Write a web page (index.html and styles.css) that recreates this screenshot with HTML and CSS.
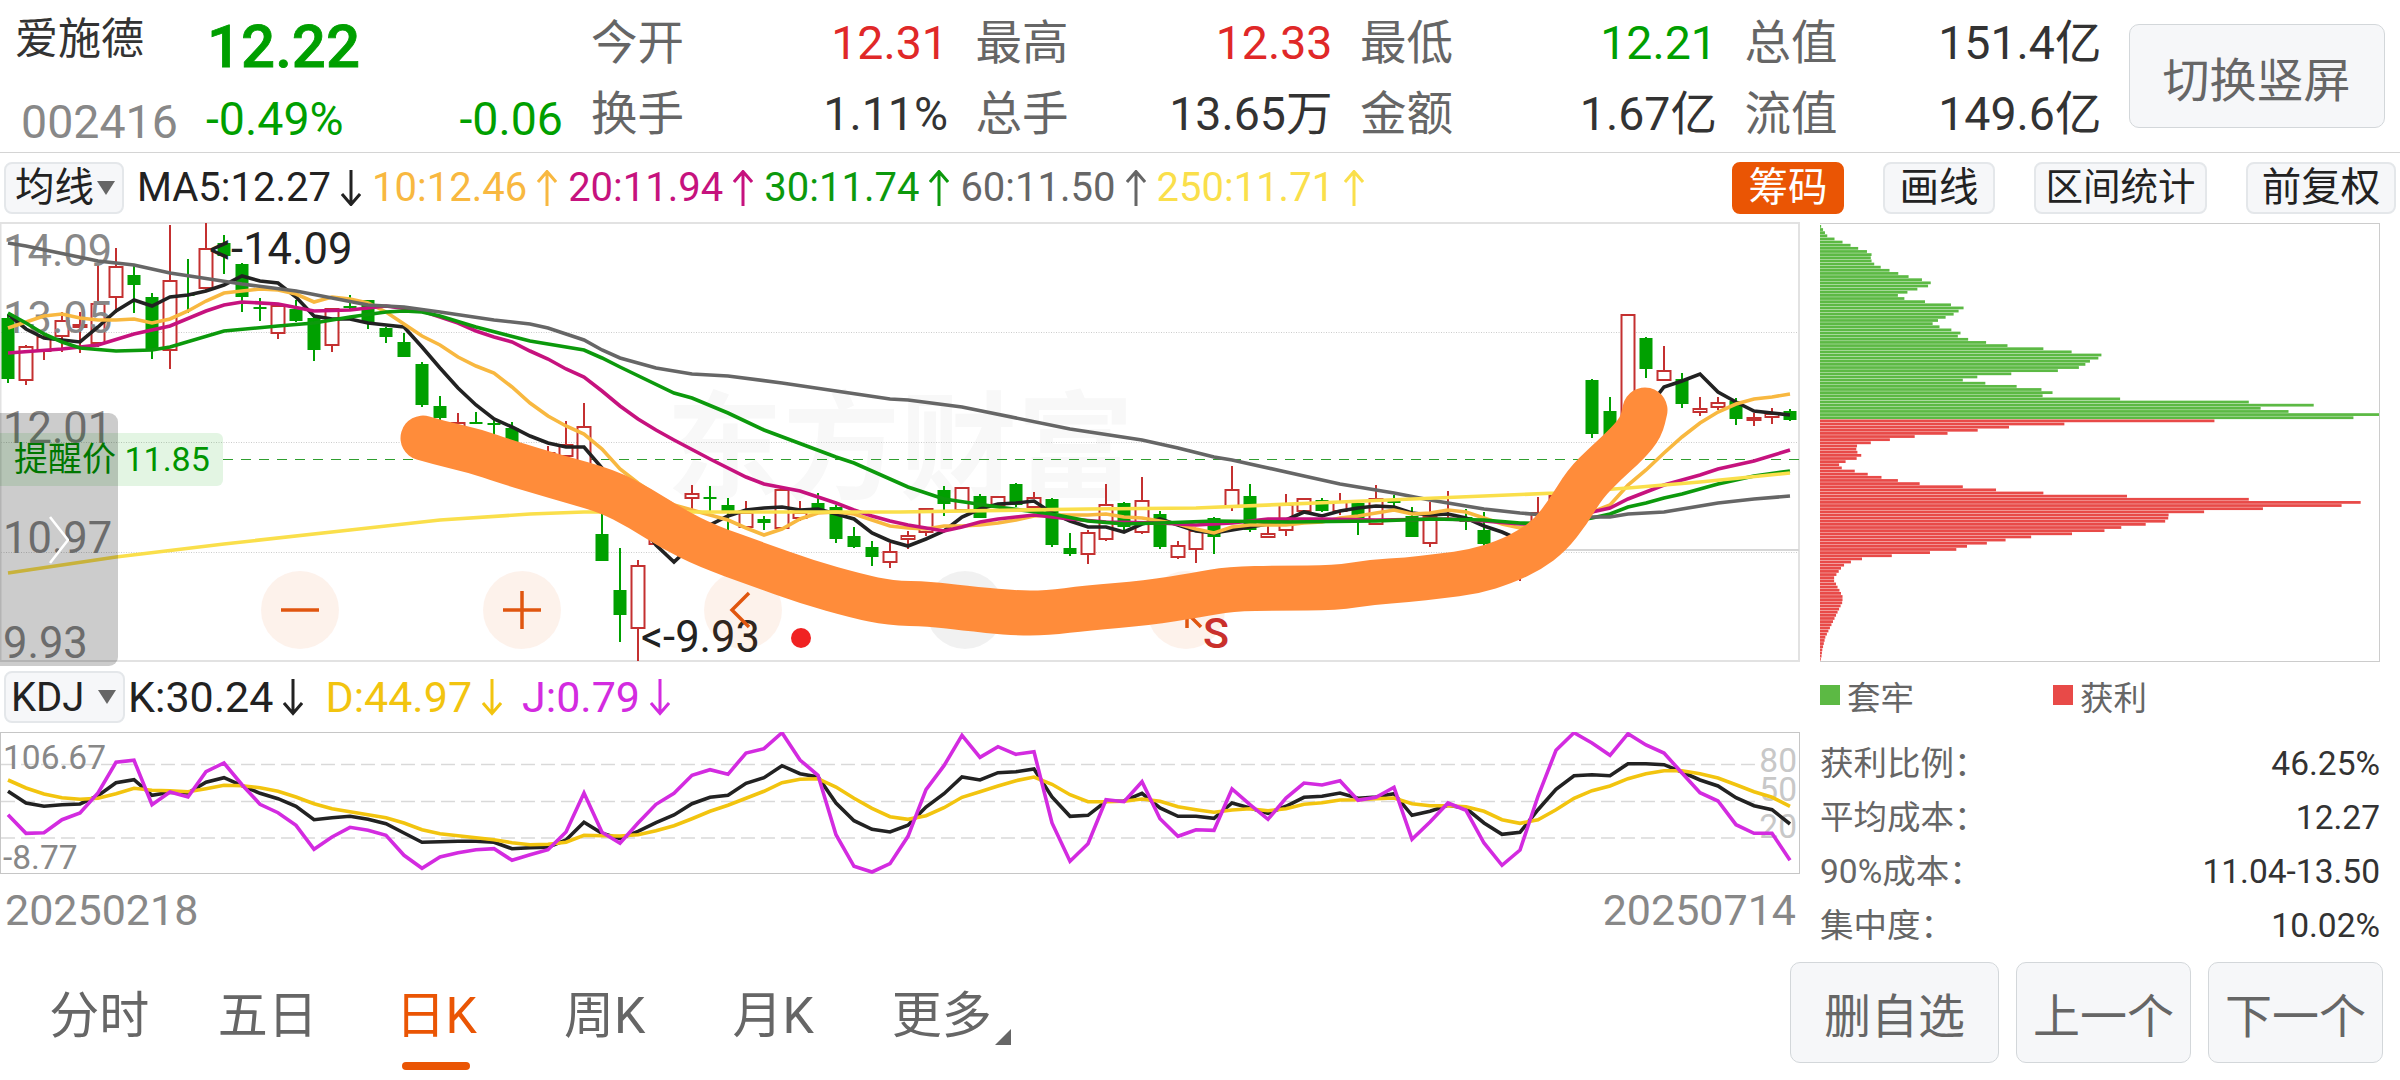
FILE: index.html
```html
<!DOCTYPE html>
<html lang="zh-CN">
<head>
    <meta charset="UTF-8">
    <meta name="viewport" content="width=device-width, initial-scale=1.0">
    <title>爱施德 002416</title>
    <link rel="stylesheet" href="styles.css">
</head>
<body>
    <!-- shared arrow icons -->
    <svg class="defs" width="0" height="0">
        <symbol id="down" viewBox="0 0 20 36"><path d="M10 0V34M1 24L10 34.5L19 24" fill="none" stroke="currentColor" stroke-width="3"/></symbol>
        <symbol id="up" viewBox="0 0 20 36"><path d="M10 36V2M1 12L10 1.5L19 12" fill="none" stroke="currentColor" stroke-width="3"/></symbol>
    </svg>

    <header class="header">
        <div class="stock">
            <div class="stock-name">爱施德</div>
            <div class="stock-code">002416</div>
        </div>
        <div class="price down">
            <div class="price-now">12.22</div>
            <div class="price-change"><span>-0.49%</span><span>-0.06</span></div>
        </div>
        <div class="quotes">
            <div class="quote"><span>今开</span><b class="rise">12.31</b></div>
            <div class="quote"><span>最高</span><b class="rise">12.33</b></div>
            <div class="quote"><span>最低</span><b class="down">12.21</b></div>
            <div class="quote"><span>总值</span><b>151.4亿</b></div>
            <div class="quote"><span>换手</span><b>1.11%</b></div>
            <div class="quote"><span>总手</span><b>13.65万</b></div>
            <div class="quote"><span>金额</span><b>1.67亿</b></div>
            <div class="quote"><span>流值</span><b>149.6亿</b></div>
        </div>
        <button class="btn btn-rotate">切换竖屏</button>
    </header>

    <div class="toolbar">
        <button class="tag tag-select">均线<i class="caret"></i></button>
        <div class="averages">
            <span class="ma5">MA5:12.27<svg class="arrow"><use href="#down"/></svg></span>
            <span class="ma10">10:12.46<svg class="arrow"><use href="#up"/></svg></span>
            <span class="ma20">20:11.94<svg class="arrow"><use href="#up"/></svg></span>
            <span class="ma30">30:11.74<svg class="arrow"><use href="#up"/></svg></span>
            <span class="ma60">60:11.50<svg class="arrow"><use href="#up"/></svg></span>
            <span class="ma250">250:11.71<svg class="arrow"><use href="#up"/></svg></span>
        </div>
        <div class="tools">
            <button class="tag tag-active">筹码</button>
            <button class="tag">画线</button>
            <button class="tag tag-wide">区间统计</button>
            <button class="tag tag-right">前复权</button>
        </div>
    </div>

    <main class="main">
        <section class="charts">
            <div class="kline">
                <svg class="kline-svg" id="kline" viewBox="0 222 1800 440">
                    <text class="watermark" x="666" y="490">东方财富</text>
                    <g class="grid">
                        <path d="M1 332.5H1799M1 442.5H1799M1 552.5H1799"/>
                    </g>
                    <rect class="frame" x="0.5" y="223" width="1798.5" height="438"/>
                    <path class="level" d="M1560 550H1799"/>
                    <path class="alert-line" d="M223 459.5H1799"/>
                    <g id="candles"></g>
                    <g class="axis">
                        <text x="3" y="266">14.09</text>
                        <text x="3" y="333">13.05</text>
                        <text x="3" y="443">12.01</text>
                        <text x="3" y="553">10.97</text>
                        <text x="3" y="658">9.93</text>
                    </g>
                    <g id="lines"></g>
                    <text class="mark" x="209" y="264">&lt;-14.09</text>
                    <text class="mark" x="641" y="652">&lt;-9.93</text>
                    <circle cx="801" cy="638" r="10" fill="#f02222"/>
                </svg>
                <div class="alert-tag">提醒价 11.85</div>
                <div class="controls">
                    <button class="round"><svg viewBox="0 0 78 78"><path d="M20 39H58"/></svg></button>
                    <button class="round"><svg viewBox="0 0 78 78"><path d="M20 39H58M39 20V58"/></svg></button>
                    <button class="round"><svg viewBox="0 0 78 78"><path d="M45 22L28 39L45 56"/></svg></button>
                    <button class="round round-gray"></button>
                    <button class="round"><svg viewBox="0 0 78 78"><path d="M40 57V42L54 56"/></svg></button>
                </div>
                <svg class="brush" viewBox="0 222 1800 440">
                    <path id="brush"/>
                    <text x="1203" y="648">S</text>
                </svg>
                <div class="drawer"><svg viewBox="0 0 20 48"><path d="M1 1L19 24L1 47"/></svg></div>
            </div>

            <div class="indicator">
                <button class="tag tag-select tag-kdj">KDJ<i class="caret"></i></button>
                <span class="k">K:30.24<svg class="arrow"><use href="#down"/></svg></span>
                <span class="d">D:44.97<svg class="arrow"><use href="#down"/></svg></span>
                <span class="j">J:0.79<svg class="arrow"><use href="#down"/></svg></span>
            </div>

            <svg class="kdj" viewBox="0 0 1800 142">
                <path class="kdj-grid" d="M1 32.5H1758M1 69.5H1758M1 106H1758"/>
                <rect class="kdj-frame" x="0.5" y="0.5" width="1799" height="141"/>
                <text x="3" y="37">106.67</text>
                <text x="3" y="137">-8.77</text>
                <g class="kdj-scale">
                    <text x="1797" y="40">80</text>
                    <text x="1797" y="69">50</text>
                    <text x="1797" y="106">20</text>
                </g>
                <g id="kdj"></g>
            </svg>

            <div class="dates"><span>20250218</span><span>20250714</span></div>
        </section>

        <aside class="chips">
            <svg class="chips-svg" id="chips" viewBox="0 0 1464 139" preserveAspectRatio="none"></svg>
            <div class="legend">
                <span><i class="box box-green"></i>套牢</span>
                <span><i class="box box-red"></i>获利</span>
            </div>
            <dl class="stats">
                <div><dt>获利比例：</dt><dd>46.25%</dd></div>
                <div><dt>平均成本：</dt><dd>12.27</dd></div>
                <div><dt>90%成本：</dt><dd>11.04-13.50</dd></div>
                <div><dt>集中度：</dt><dd>10.02%</dd></div>
            </dl>
        </aside>
    </main>

    <footer class="footer">
        <nav class="tabs">
            <a>分时</a>
            <a>五日</a>
            <a class="active">日K</a>
            <a>周K</a>
            <a>月K</a>
            <a class="more">更多</a>
        </nav>
        <div class="actions">
            <button class="btn btn-del">删自选</button>
            <button class="btn">上一个</button>
            <button class="btn">下一个</button>
        </div>
    </footer>

    <script src="app.js"></script>
</body>
</html>
```
FILE: styles.css
```css
* {
  box-sizing: border-box;
}

body {
  margin: 0;
  width: 2400px;
  height: 1080px;
  overflow: hidden;
  background: #fff;
  color: #333;
  font-family: Roboto, "Noto Sans CJK SC", sans-serif;
}

button {
  padding: 0;
  font-family: inherit;
  cursor: pointer;
}

.defs {
  display: block;
}

.rise {
  color: #e02828 !important;
}

.down {
  color: #009f00 !important;
}

/* header */
.header {
  display: flex;
  height: 153px;
  padding-left: 15px;
  border-bottom: 1px solid #d4d4d4;
  font-size: 46.5px;
  line-height: 71px;
}

.stock {
  width: 190px;
  padding-top: 4px;
}

.stock-name {
  font-size: 43px;
}

.stock-code {
  margin-top: 12px;
  padding-left: 6px;
  color: #888;
}

.price {
  width: 358px;
  padding-top: 11px;
}

.price-now {
  padding-left: 2px;
  font-size: 60px;
  font-weight: 500;
  -webkit-text-stroke: 0.8px #009f00;
}

.price-change {
  display: flex;
  justify-content: space-between;
  margin-top: 2px;
  padding-left: 1px;
}

.quotes {
  display: grid;
  grid-template-columns: repeat(4, 357px);
  grid-auto-rows: 71px;
  column-gap: 27.5px;
  padding-top: 8px;
  margin-left: 28px;
}

.quote {
  display: flex;
  justify-content: space-between;
}

.quote span {
  color: #666;
}

.quote b {
  font-weight: 400;
}

.btn {
  width: 175px;
  height: 101px;
  border: 1px solid #d3d7da;
  border-radius: 10px;
  background: #f6f7f9;
  color: #666;
  font-size: 47px;
}

.btn-rotate {
  width: 256px;
  height: 104px;
  margin: 24px 0 0 27px;
}

/* toolbar */
.toolbar {
  display: flex;
  align-items: center;
  height: 69px;
  padding: 0 4px;
}

.tag {
  width: 112px;
  height: 52px;
  border: 2px solid #e4e7ea;
  border-radius: 8px;
  background: #f6f7f9;
  color: #222;
  font-size: 39.5px;
  line-height: 47px;
}

.tag-select {
  display: flex;
  align-items: center;
  justify-content: space-between;
  width: 120px;
  padding: 0 7px 0 9px;
}

.tag-active {
  border-color: #ea5504;
  background: #ea5504;
  color: #fff;
}

.tag-wide {
  width: 173px;
  font-size: 37.5px;
}

.tag-right {
  width: 150px;
}

.caret {
  border: 9px solid transparent;
  border-top: 14px solid #666;
  border-bottom: 0;
}

.averages {
  display: flex;
  gap: 11px;
  margin-left: 13px;
  font-size: 40px;
}

.averages span,
.indicator span {
  display: flex;
  align-items: center;
}

.arrow {
  width: 20px;
  height: 36px;
  margin-left: 10px;
}

.ma5, .k { color: #222; }
.ma10 { color: #f8b840; }
.ma20 { color: #c6127e; }
.ma30 { color: #0c990c; }
.ma60 { color: #666; }
.ma250 { color: #fadf4b; }
.d { color: #f2c40f; }
.j { color: #d32be0; }

.tools {
  display: flex;
  gap: 39px;
  margin-left: auto;
}

.main {
  display: flex;
  height: 724px;
}

.charts {
  width: 1800px;
}

/* candlestick chart */
.kline {
  position: relative;
  height: 440px;
}

.kline-svg,
.kdj {
  display: block;
  width: 1800px;
}

.watermark {
  fill: #f8f8f8;
  font-size: 117px;
  font-weight: 700;
}

.grid path {
  stroke: #ccc;
  stroke-dasharray: 1 1.5;
}

.frame {
  fill: none;
  stroke: #e2e2e2;
  stroke-width: 2;
}

.level {
  stroke: #d6d6d6;
  stroke-width: 2;
}

.alert-line {
  stroke: #2f9e2f;
  stroke-dasharray: 10 8;
}

.axis text {
  fill: #888;
  font-size: 43.5px;
}

.mark {
  fill: #222;
  font-size: 43.5px;
}

.candle-up {
  fill: #fff;
  stroke: #c43030;
  stroke-width: 2;
}

.candle-down {
  fill: #00a000;
  stroke: #00a000;
  stroke-width: 2;
}

.line {
  fill: none;
  stroke: currentColor;
  stroke-width: 3.6;
}

.alert-tag {
  position: absolute;
  left: 0;
  top: 211px;
  width: 223px;
  height: 53px;
  padding-left: 14px;
  border-radius: 0 6px 6px 0;
  background: rgba(0, 160, 0, .11);
  color: #009500;
  font-size: 34px;
  line-height: 53px;
}

.controls {
  position: absolute;
  left: 261px;
  top: 349px;
  display: flex;
  gap: 143.5px;
}

.round {
  width: 78px;
  height: 78px;
  border: 0;
  border-radius: 50%;
  background: rgba(234, 85, 4, .08);
}

.round-gray {
  background: rgba(0, 0, 0, .055);
}

.round svg {
  display: block;
  fill: none;
  stroke: #e0560f;
  stroke-width: 3.5;
}

.brush {
  position: absolute;
  left: 0;
  top: 0;
  width: 1800px;
}

.brush path {
  fill: none;
  stroke: #ff8c3a;
  stroke-width: 45;
  stroke-linecap: round;
  stroke-linejoin: round;
}

.brush text {
  fill: #c9302c;
  font-size: 43px;
  font-weight: 500;
}

.drawer {
  position: absolute;
  left: 0;
  top: 191px;
  display: flex;
  align-items: center;
  width: 118px;
  height: 253px;
  padding-left: 49px;
  border-radius: 0 9px 9px 0;
  background: rgba(0, 0, 0, .2);
}

.drawer svg {
  width: 20px;
  fill: none;
  stroke: #fff;
  stroke-width: 2.6;
}

/* kdj */
.indicator {
  display: flex;
  align-items: center;
  height: 70px;
  padding-left: 4px;
  font-size: 43px;
}

.indicator .arrow {
  height: 38px;
  margin-left: 10px;
}

.indicator .k {
  margin: 0 22px 0 3px;
}

.indicator .d {
  margin-right: 20px;
}

.tag-kdj {
  width: 121px;
  padding-left: 5px;
  font-size: 40px;
}

.kdj text {
  fill: #888;
  font-size: 33.5px;
}

.kdj .kdj-scale text {
  fill: #c8c8c8;
  text-anchor: end;
}

.kdj-frame {
  fill: none;
  stroke: #c6c6c6;
}

.kdj-grid {
  stroke: #d9d9d9;
  stroke-width: 1.5;
  stroke-dasharray: 14 6;
}

.dates {
  display: flex;
  justify-content: space-between;
  padding: 0 4px 0 5px;
  color: #888;
  font-size: 43px;
  line-height: 72px;
}

/* chip distribution */
.chips {
  width: 600px;
  padding: 0 20px;
}

.chips-svg {
  display: block;
  width: 560px;
  height: 439px;
  margin-top: 1px;
  padding-top: 1px;
  border: 1px solid #ccc;
  border-left: 0;
}

.chip-green {
  fill: #5cb944;
}

.chip-red {
  fill: #e84a48;
}

.legend {
  display: flex;
  height: 66px;
  color: #666;
  font-size: 33.5px;
}

.legend span {
  display: flex;
  align-items: center;
  width: 233px;
}

.box {
  width: 20px;
  height: 20px;
  margin-right: 7px;
}

.box-green {
  background: #5cb944;
}

.box-red {
  background: #e84a48;
}

.stats {
  margin: 9px 0 0;
  font-size: 33.5px;
  line-height: 54px;
}

.stats div {
  display: flex;
  justify-content: space-between;
}

.stats dt {
  color: #666;
}

.stats dd {
  margin: 0;
}

/* footer */
.footer {
  display: flex;
  justify-content: space-between;
  height: 134px;
  padding: 16px 17px 0 15px;
}

.tabs {
  display: flex;
  color: #666;
  font-size: 50px;
  line-height: 108px;
}

.tabs a {
  display: flex;
  flex-direction: column;
  align-items: center;
  width: 168.5px;
  height: 110px;
}

.tabs .active {
  color: #ea5504;
}

.tabs .active::after {
  content: "";
  flex: none;
  width: 68px;
  height: 8px;
  margin-top: -8px;
  border-radius: 4px;
  background: #ea5504;
}

.tabs .more::after {
  content: "";
  margin: -41px 0 0 122px;
  border: 8px solid #666;
  border-top-color: transparent;
  border-left-color: transparent;
}

.actions {
  display: flex;
  gap: 17px;
}

.btn-del {
  width: 209px;
}
```
FILE: app.js
```javascript
const STEP = 18;
const START = 8;

// [index, up/down, high, body top, body bottom, low]
const candles = [
  [0, "d", 314, 319, 378, 383], [1, "u", 345, 347, 380, 385], [2, "u", 333, 337, 351, 360],
  [3, "u", 312, 321, 336, 352], [4, "u", 312, 325, 327, 353], [5, "u", 265, 304, 343, 347],
  [6, "u", 248, 267, 297, 313], [7, "d", 266, 276, 284, 313], [8, "d", 293, 298, 349, 359],
  [9, "u", 225, 281, 350, 369], [10, "d", 259, 295, 295, 313], [11, "u", 223, 249, 288, 291],
  [12, "d", 235, 244, 255, 274], [13, "d", 263, 265, 296, 312], [14, "d", 298, 308, 308, 321],
  [15, "u", 306, 306, 333, 339], [16, "d", 300, 310, 320, 322], [17, "d", 317, 319, 349, 361],
  [18, "u", 308, 309, 345, 352], [19, "d", 295, 307, 307, 310], [20, "d", 300, 301, 321, 329],
  [21, "d", 327, 329, 336, 343], [22, "d", 333, 343, 356, 357], [23, "d", 362, 365, 404, 407],
  [24, "d", 396, 407, 417, 422], [25, "u", 413, 423, 440, 445], [26, "d", 412, 423, 423, 424],
  [27, "d", 420, 424, 424, 436], [28, "d", 422, 429, 450, 455], [30, "u", 446, 453, 470, 475],
  [31, "u", 421, 445, 456, 460], [32, "u", 403, 427, 475, 480], [33, "d", 513, 535, 560, 561],
  [34, "d", 548, 591, 614, 642], [35, "u", 560, 566, 628, 661], [36, "u", 525, 527, 544, 545],
  [38, "u", 485, 494, 498, 510], [39, "d", 486, 498, 498, 512], [40, "d", 498, 506, 511, 532],
  [41, "u", 501, 513, 527, 528], [42, "d", 516, 520, 522, 530], [43, "u", 489, 490, 528, 529],
  [44, "u", 501, 513, 518, 521], [45, "d", 493, 504, 508, 510], [46, "d", 505, 508, 538, 543],
  [47, "d", 527, 537, 546, 548], [48, "d", 541, 548, 556, 566], [49, "u", 543, 552, 562, 568],
  [50, "u", 531, 536, 539, 549], [51, "u", 508, 509, 532, 536], [52, "d", 486, 491, 503, 516],
  [53, "u", 487, 488, 510, 510], [54, "d", 494, 497, 517, 518], [55, "u", 497, 497, 505, 505],
  [56, "d", 483, 485, 504, 507], [57, "u", 492, 498, 507, 508], [58, "d", 498, 500, 544, 547],
  [59, "d", 533, 549, 553, 556], [60, "u", 530, 533, 554, 564], [61, "u", 484, 505, 539, 541],
  [62, "d", 502, 504, 526, 530], [63, "u", 477, 501, 532, 534], [64, "d", 511, 515, 546, 549],
  [65, "u", 541, 546, 557, 559], [66, "u", 531, 531, 549, 563], [67, "d", 517, 519, 536, 554],
  [68, "u", 466, 490, 507, 511], [69, "d", 484, 497, 529, 532], [70, "u", 526, 534, 537, 538],
  [71, "u", 494, 505, 530, 536], [72, "u", 498, 499, 511, 514], [73, "d", 498, 501, 510, 512],
  [74, "u", 493, 502, 511, 515], [75, "d", 503, 504, 518, 535], [76, "u", 485, 499, 524, 525],
  [77, "d", 495, 502, 502, 507], [78, "d", 507, 517, 536, 537], [79, "u", 502, 517, 543, 547],
  [80, "u", 491, 519, 520, 520], [81, "d", 509, 518, 521, 530], [82, "d", 512, 531, 543, 549],
  [84, "u", 540, 550, 562, 581], [85, "u", 497, 513, 530, 540], [86, "u", 495, 496, 520, 525],
  [88, "d", 379, 381, 433, 438], [89, "d", 397, 412, 440, 445], [90, "u", 315, 315, 420, 422],
  [91, "d", 337, 339, 368, 378], [92, "u", 346, 371, 380, 381], [93, "d", 373, 380, 403, 408],
  [94, "u", 397, 409, 412, 416], [95, "u", 397, 403, 407, 410], [96, "d", 398, 402, 418, 425],
  [97, "u", 413, 418, 420, 426], [98, "u", 408, 414, 417, 424], [99, "d", 409, 412, 419, 421]
];

// one value per candle
const ma5 = [314, 329, 338, 340, 342, 327, 311, 300, 306, 297, 295, 291, 285, 276, 281, 283, 297, 316, 319, 319,
  323, 325, 327, 347, 368, 388, 405, 419, 427, 436, 443, 447, 447, 468, 500, 520, 545, 562, 545, 525,
  516, 510, 508, 507, 510, 509, 514, 519, 533, 541, 546, 539, 531, 517, 509, 504, 503, 501, 513, 521,
  527, 527, 532, 524, 519, 525, 531, 533, 530, 527, 524, 520, 512, 516, 511, 508, 506, 507, 513, 515,
  514, 518, 526, 532, 540, 536, 525, 505, 480, 450, 425, 410, 387, 381, 374, 392, 402, 411, 413, 415];

const ma10 = [328, 322, 316, 314, 318, 320, 320, 319, 323, 319, 311, 301, 293, 291, 289, 290, 294, 302, 297, 299,
  303, 312, 324, 336, 345, 357, 366, 373, 387, 403, 416, 426, 434, 449, 469, 483, 495, 505, 510, 515,
  520, 528, 535, 529, 519, 513, 512, 514, 520, 526, 528, 529, 526, 526, 525, 523, 520, 516, 515, 515,
  515, 514, 517, 518, 521, 524, 529, 533, 527, 525, 525, 525, 523, 522, 518, 516, 513, 510, 514, 513,
  510, 512, 518, 524, 528, 525, 520, 518, 512, 505, 485, 470, 453, 437, 423, 412, 404, 399, 397, 394];

// slower averages are stored as x,y turning points
const ma20 = "8,353 62,349 98,345 134,334 170,326 206,311 224,305 242,302 278,304 314,311 350,310 386,306 422,311 440,317 458,323 476,331 494,337 512,342 530,351 548,359 566,369 584,377 602,391 620,406 638,419 656,430 674,440 710,459 746,477 764,484 800,491 818,497 836,503 854,510 872,516 890,521 908,525 944,531 962,527 980,522 998,519 1034,515 1070,519 1106,522 1160,523 1196,525 1232,523 1268,519 1322,519 1376,520 1448,519 1484,521 1520,524 1556,523 1592,512 1610,508 1628,499 1646,492 1664,485 1700,475 1718,469 1736,465 1754,461 1790,450";
const ma30 = "8,313 26,323 44,334 62,342 80,348 116,351 152,350 170,347 224,331 278,326 314,323 350,317 386,312 404,311 422,312 440,316 476,327 530,341 584,350 602,358 620,367 674,393 692,398 728,413 764,430 836,457 854,463 908,487 944,499 998,507 1052,514 1088,521 1124,524 1160,523 1214,521 1286,522 1376,521 1430,519 1484,520 1520,523 1556,524 1592,518 1610,514 1628,507 1646,503 1664,498 1682,494 1718,484 1754,476 1790,471";
const ma60 = "8,243 26,246 98,261 134,265 170,273 242,284 296,291 368,305 404,307 440,312 494,320 530,324 548,328 584,340 602,350 620,358 656,368 692,374 728,376 782,383 836,391 890,399 908,400 962,407 1070,429 1142,440 1178,448 1214,457 1232,460 1304,476 1340,484 1394,493 1430,500 1484,509 1520,513 1556,516 1592,517 1610,517 1628,514 1664,512 1682,509 1718,503 1754,499 1790,496";
const ma250 = "8,573 116,557 224,544 350,530 440,520 530,514 584,512 692,512 900,512 1088,509 1196,508 1340,502 1556,493 1628,488 1700,482 1790,473";

// kdj points, three units per pixel, 217 is the top edge
const kLine = [395, 430, 440, 435, 433, 408, 369, 360, 407, 398, 400, 368, 354, 378, 401, 417, 440, 480, 474, 470,
  479, 492, 520, 548, 546, 545, 545, 548, 567, 564, 563, 541, 488, 521, 537, 515, 489, 466, 432, 413,
  407, 371, 354, 318, 342, 352, 430, 483, 509, 517, 497, 442, 402, 352, 361, 339, 336, 328, 412, 470,
  467, 425, 424, 401, 445, 470, 470, 476, 430, 445, 461, 440, 413, 410, 400, 416, 412, 402, 467, 455,
  437, 446, 490, 524, 518, 450, 389, 348, 345, 348, 312, 312, 315, 337, 361, 379, 414, 438, 450, 493];

const dLine = [361, 385, 403, 414, 419, 416, 402, 386, 392, 393, 396, 387, 377, 378, 384, 395, 412, 432, 447, 456,
  465, 474, 490, 510, 522, 528, 534, 540, 549, 555, 554, 548, 527, 528, 529, 525, 513, 498, 477, 455,
  437, 416, 395, 369, 359, 357, 382, 416, 446, 471, 479, 468, 444, 413, 396, 379, 363, 352, 374, 405,
  426, 426, 425, 418, 425, 441, 450, 458, 451, 447, 453, 447, 434, 429, 421, 420, 417, 415, 432, 438,
  438, 441, 455, 480, 491, 480, 450, 416, 393, 379, 357, 342, 333, 333, 342, 355, 375, 396, 413, 440];

const jLine = [465, 521, 519, 480, 460, 400, 308, 302, 435, 397, 412, 336, 310, 375, 434, 459, 497, 569, 532, 503,
  512, 527, 587, 626, 592, 579, 570, 567, 602, 585, 570, 517, 400, 518, 551, 490, 434, 401, 347, 330,
  344, 280, 267, 219, 301, 347, 525, 620, 637, 612, 530, 390, 318, 227, 293, 261, 284, 276, 490, 605,
  552, 420, 426, 366, 477, 530, 510, 512, 388, 435, 479, 415, 370, 376, 363, 422, 413, 383, 539, 487,
  430, 452, 550, 617, 571, 410, 272, 219, 250, 287, 222, 256, 280, 340, 399, 424, 495, 521, 521, 602];

// chip distribution, highest price first
const GREEN_COUNT = 62;
const chips = [3, 8, 13, 19, 38, 59, 80, 100, 123, 135, 133, 135, 142, 159, 182, 205, 232, 267, 290, 283,
  255, 229, 204, 221, 275, 343, 376, 363, 350, 329, 309, 295, 313, 344, 368, 361, 388, 435, 491, 585,
  659, 737, 729, 707, 695, 678, 623, 501, 412, 374, 433, 515, 580, 609, 583, 786, 1123, 1293, 1154, 1227,
  1464, 1397, 1033, 640, 495, 413, 334, 248, 183, 133, 97, 95, 98, 108, 96, 67, 50, 57, 91, 125,
  161, 204, 261, 374, 461, 585, 804, 1123, 1416, 1366, 1160, 1006, 913, 912, 904, 853, 789, 745, 660, 553,
  486, 437, 385, 357, 288, 188, 110, 81, 63, 55, 49, 43, 37, 37, 42, 46, 51, 55, 59, 59,
  58, 54, 50, 46, 42, 38, 34, 30, 26, 22, 18, 14, 12, 10, 8, 6, 5, 4, 2];

const brush = [[423, 438], [440, 443], [475, 451], [507, 462], [557, 477], [607, 491], [640, 508], [673, 529],
  [707, 546], [757, 564], [807, 582], [857, 596], [890, 603], [930, 604], [963, 608], [1013, 613], [1047, 613],
  [1087, 608], [1147, 603], [1197, 595], [1230, 589], [1280, 588], [1335, 588], [1373, 582], [1407, 580],
  [1440, 576], [1473, 572], [1505, 562], [1530, 550], [1550, 535], [1568, 512], [1585, 484], [1605, 464],
  [1628, 443], [1641, 427], [1645, 410]];

function toPoints(values, scaleY) {
  return values.map((v, i) => `${START + i * STEP},${scaleY ? scaleY(v) : v}`).join(" ");
}

function polyline(points, cls) {
  return `<polyline class="line ${cls}" points="${points}"/>`;
}

function drawCandle([i, type, high, top, bottom, low]) {
  const x = START + i * STEP;
  const cls = type === "u" ? "candle-up" : "candle-down";
  const half = type === "u" ? 6.5 : 5.5;
  const wick = `<path class="${cls}" d="M${x} ${high}V${top}M${x} ${bottom}V${low}"/>`;
  if (top === bottom) {
    return wick + `<path class="${cls}" d="M${x - 6.5} ${top}H${x + 6.5}"/>`;
  }
  return wick + `<rect class="${cls}" x="${x - half}" y="${top}" width="${half * 2}" height="${bottom - top}"/>`;
}

document.getElementById("candles").innerHTML = candles.map(drawCandle).join("");

document.getElementById("lines").innerHTML =
  polyline(toPoints(ma5), "ma5") +
  polyline(toPoints(ma10), "ma10") +
  polyline(ma20, "ma20") +
  polyline(ma30, "ma30") +
  polyline(ma60, "ma60") +
  polyline(ma250, "ma250");

const kdjY = (v) => ((v - 217) / 3).toFixed(1);
document.getElementById("kdj").innerHTML =
  polyline(toPoints(kLine, kdjY), "k") +
  polyline(toPoints(dLine, kdjY), "d") +
  polyline(toPoints(jLine, kdjY), "j");

document.getElementById("chips").innerHTML = chips
  .map((w, i) => `<rect class="${i < GREEN_COUNT ? "chip-green" : "chip-red"}" x="0" y="${i}" width="${w}" height="0.88"/>`)
  .join("");

// smooth the brush by running curves through the midpoints
let d = `M${brush[0]}`;
for (let i = 1; i < brush.length - 1; i++) {
  const [x, y] = brush[i];
  const [nx, ny] = brush[i + 1];
  d += `Q${x} ${y} ${(x + nx) / 2} ${(y + ny) / 2}`;
}
d += `L${brush[brush.length - 1]}`;
document.getElementById("brush").setAttribute("d", d);
```
